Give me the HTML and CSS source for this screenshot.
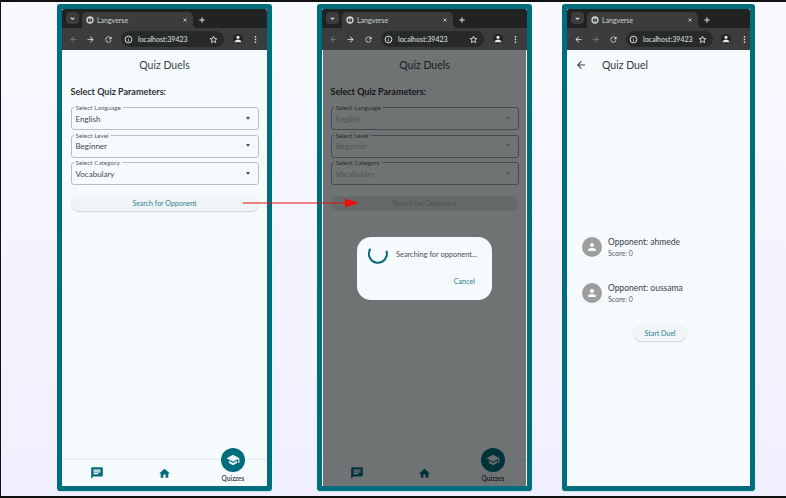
FILE: index.html
```html
<!DOCTYPE html>
<html lang="en">
<head>
  <meta charset="UTF-8" />
  <title>Langverse – Quiz Duels</title>
  <link rel="stylesheet" href="styles.css">
</head>
<body>

  <svg class="defs" width="0" height="0">
    <symbol id="i-chevron" viewBox="0 0 24 24"><path d="M6 9l6 6 6-6" fill="none" stroke="currentColor" stroke-width="3.5"/></symbol>
    <symbol id="i-fav" viewBox="0 0 24 24"><circle cx="12" cy="12" r="11" fill="#c9cccc"/><path d="M6 8h5v9H6zM13 8h5v9h-5z" fill="#333"/></symbol>
    <symbol id="i-close" viewBox="0 0 24 24"><path d="M6 6l12 12M18 6L6 18" stroke="currentColor" stroke-width="3"/></symbol>
    <symbol id="i-plus" viewBox="0 0 24 24"><path d="M12 4v16M4 12h16" stroke="currentColor" stroke-width="3"/></symbol>
    <symbol id="i-back" viewBox="0 0 24 24"><path d="M20 11H7.8l5.6-5.6L12 4l-8 8 8 8 1.4-1.4L7.8 13H20z" fill="currentColor"/></symbol>
    <symbol id="i-forward" viewBox="0 0 24 24"><path d="M4 11h12.2l-5.6-5.6L12 4l8 8-8 8-1.4-1.4 5.6-5.6H4z" fill="currentColor"/></symbol>
    <symbol id="i-reload" viewBox="0 0 24 24"><path d="M17.6 6.4A8 8 0 1 0 19.7 14h-2.1a6 6 0 1 1-1.4-6.2L13 11h7V4z" fill="currentColor"/></symbol>
    <symbol id="i-info" viewBox="0 0 24 24"><circle cx="12" cy="12" r="9" fill="none" stroke="currentColor" stroke-width="2.5"/><path d="M11 11h2v6h-2zM11 7h2v2h-2z" fill="currentColor"/></symbol>
    <symbol id="i-star" viewBox="0 0 24 24"><path d="M12 3.5l2.6 5.8 6.3.6-4.8 4.2 1.4 6.2L12 17.1l-5.5 3.2 1.4-6.2-4.8-4.2 6.3-.6z" fill="none" stroke="currentColor" stroke-width="2.4"/></symbol>
    <symbol id="i-person" viewBox="0 0 24 24"><path d="M12 12a4 4 0 1 0 0-8 4 4 0 0 0 0 8zm0 2c-2.7 0-8 1.3-8 4v2h16v-2c0-2.7-5.3-4-8-4z" fill="currentColor"/></symbol>
    <symbol id="i-dots" viewBox="0 0 24 24"><circle cx="12" cy="5" r="2.2" fill="currentColor"/><circle cx="12" cy="12" r="2.2" fill="currentColor"/><circle cx="12" cy="19" r="2.2" fill="currentColor"/></symbol>
    <symbol id="i-chat" viewBox="0 0 24 24"><path d="M20 2H4a2 2 0 0 0-2 2v18l4-4h14a2 2 0 0 0 2-2V4a2 2 0 0 0-2-2zM6 9h12v2H6zm8 5H6v-2h8zm4-6H6V6h12z" fill="currentColor"/></symbol>
    <symbol id="i-home" viewBox="0 0 24 24"><path d="M10 20v-6h4v6h5v-8h3L12 3 2 12h3v8z" fill="currentColor"/></symbol>
    <symbol id="i-school" viewBox="0 0 24 24"><path d="M5 13.2v4L12 21l7-3.8v-4L12 17zM12 3L1 9l11 6 9-4.9V17h2V9z" fill="currentColor"/></symbol>
  </svg>

  <div class="stage">

    <!-- first phone: quiz parameters -->
    <section class="phone">
      <div class="chrome">
        <div class="tabstrip">
          <span class="tab-menu"><svg class="ic7"><use href="#i-chevron"/></svg></span>
          <div class="tab">
            <svg class="ic8"><use href="#i-fav"/></svg>
            <span class="tab-title">Langverse</span>
            <svg class="ic6 tab-close"><use href="#i-close"/></svg>
          </div>
          <svg class="ic8 new-tab"><use href="#i-plus"/></svg>
        </div>
        <div class="toolbar">
          <svg class="ic9 dim"><use href="#i-back"/></svg>
          <svg class="ic9"><use href="#i-forward"/></svg>
          <svg class="ic9"><use href="#i-reload"/></svg>
          <div class="omnibox">
            <svg class="ic9"><use href="#i-info"/></svg>
            <span class="url">localhost:39423</span>
            <svg class="ic9 star"><use href="#i-star"/></svg>
          </div>
          <svg class="ic10 profile"><use href="#i-person"/></svg>
          <svg class="ic9"><use href="#i-dots"/></svg>
        </div>
      </div>
      <div class="screen">
        <h1 class="title">Quiz Duels</h1>
        <div class="form">
          <h2 class="form-head">Select Quiz Parameters:</h2>
          <div class="select"><label>Select Language</label><span>English</span><i class="caret"></i></div>
          <div class="select"><label>Select Level</label><span>Beginner</span><i class="caret"></i></div>
          <div class="select"><label>Select Category</label><span>Vocabulary</span><i class="caret"></i></div>
          <button class="btn btn-wide">Search for Opponent</button>
        </div>
        <nav class="bottom-nav">
          <svg class="nav-icon chat"><use href="#i-chat"/></svg>
          <svg class="nav-icon home"><use href="#i-home"/></svg>
          <div class="nav-active">
            <span class="fab"><svg class="ic14"><use href="#i-school"/></svg></span>
            <span class="nav-label">Quizzes</span>
          </div>
        </nav>
      </div>
    </section>

    <!-- second phone: same page, dialog open -->
    <section class="phone second">
      <div class="chrome">
        <div class="tabstrip">
          <span class="tab-menu"><svg class="ic7"><use href="#i-chevron"/></svg></span>
          <div class="tab">
            <svg class="ic8"><use href="#i-fav"/></svg>
            <span class="tab-title">Langverse</span>
            <svg class="ic6 tab-close"><use href="#i-close"/></svg>
          </div>
          <svg class="ic8 new-tab"><use href="#i-plus"/></svg>
        </div>
        <div class="toolbar">
          <svg class="ic9 dim"><use href="#i-back"/></svg>
          <svg class="ic9"><use href="#i-forward"/></svg>
          <svg class="ic9"><use href="#i-reload"/></svg>
          <div class="omnibox">
            <svg class="ic9"><use href="#i-info"/></svg>
            <span class="url">localhost:39423</span>
            <svg class="ic9 star"><use href="#i-star"/></svg>
          </div>
          <svg class="ic10 profile"><use href="#i-person"/></svg>
          <svg class="ic9"><use href="#i-dots"/></svg>
        </div>
      </div>
      <div class="screen">
        <h1 class="title">Quiz Duels</h1>
        <div class="form">
          <h2 class="form-head">Select Quiz Parameters:</h2>
          <div class="select"><label>Select Language</label><span>English</span><i class="caret"></i></div>
          <div class="select"><label>Select Level</label><span>Beginner</span><i class="caret"></i></div>
          <div class="select"><label>Select Category</label><span>Vocabulary</span><i class="caret"></i></div>
          <button class="btn btn-wide">Search for Opponent</button>
        </div>
        <nav class="bottom-nav">
          <svg class="nav-icon chat"><use href="#i-chat"/></svg>
          <svg class="nav-icon home"><use href="#i-home"/></svg>
          <div class="nav-active">
            <span class="fab"><svg class="ic14"><use href="#i-school"/></svg></span>
            <span class="nav-label">Quizzes</span>
          </div>
        </nav>
        <div class="scrim">
          <div class="dialog">
            <div class="dialog-row">
              <svg class="spinner" viewBox="0 0 20 20"><path d="M2.4 4.8A9 9 0 1 0 18.4 6.8" fill="none" stroke="#0b6a78" stroke-width="2"/></svg>
              <span>Searching for opponent...</span>
            </div>
            <span class="dialog-action">Cancel</span>
          </div>
        </div>
      </div>
    </section>

    <!-- third phone: duel lobby -->
    <section class="phone third">
      <div class="chrome">
        <div class="tabstrip">
          <span class="tab-menu"><svg class="ic7"><use href="#i-chevron"/></svg></span>
          <div class="tab">
            <svg class="ic8"><use href="#i-fav"/></svg>
            <span class="tab-title">Langverse</span>
            <svg class="ic6 tab-close"><use href="#i-close"/></svg>
          </div>
          <svg class="ic8 new-tab"><use href="#i-plus"/></svg>
        </div>
        <div class="toolbar">
          <svg class="ic9"><use href="#i-back"/></svg>
          <svg class="ic9 dim"><use href="#i-forward"/></svg>
          <svg class="ic9"><use href="#i-reload"/></svg>
          <div class="omnibox">
            <svg class="ic9"><use href="#i-info"/></svg>
            <span class="url">localhost:39423</span>
            <svg class="ic9 star"><use href="#i-star"/></svg>
          </div>
          <svg class="ic10 profile"><use href="#i-person"/></svg>
          <svg class="ic9"><use href="#i-dots"/></svg>
        </div>
      </div>
      <div class="screen">
        <header class="duel-bar">
          <svg class="back-arrow"><use href="#i-back"/></svg>
          <h1>Quiz Duel</h1>
        </header>
        <div class="players">
          <div class="player">
            <span class="avatar"><svg class="ic12"><use href="#i-person"/></svg></span>
            <div><p class="player-name">Opponent: ahmede</p><p class="player-score">Score: 0</p></div>
          </div>
          <div class="player">
            <span class="avatar"><svg class="ic12"><use href="#i-person"/></svg></span>
            <div><p class="player-name">Opponent: oussama</p><p class="player-score">Score: 0</p></div>
          </div>
          <button class="btn btn-start">Start Duel</button>
        </div>
      </div>
    </section>

    <svg class="flow-arrow" viewBox="0 0 116 12" width="116" height="12">
      <path d="M0 6h104" stroke="#e01010" stroke-width="1.2"/>
      <path d="M102 1.5L116 6l-14 4.5z" fill="#ee0d0d"/>
    </svg>
  </div>

</body>
</html>
```

FILE: styles.css
```css
* {
  box-sizing: border-box;
}
body {
  margin: 0;
  width: 786px;
  height: 498px;
  overflow: hidden;
  font-family: 'Lato', 'Liberation Sans', sans-serif;
  background: linear-gradient(#f9faff, #f0efff);
  color: #3c4043;
  border-top: 2px solid #111;
  border-left: 1px solid #111;
  border-bottom: 2px solid #111;
}
.defs {
  display: block;
  height: 0;
}
.stage {
  position: relative;
  display: flex;
  padding: 2px 0 0 56px;
}
.phone {
  width: 215px;
  height: 487px;
  border: 5px solid #006d7c;
  border-radius: 3px;
  display: flex;
  flex-direction: column;
  background: #f5fafd;
  box-shadow: 0 1px 1px #bfe0ea;
}
.second {
  margin-left: 45px;
}
.third {
  width: 193px;
  margin-left: 30px;
}

/* browser chrome */
.chrome {
  flex: none;
  height: 41px;
  color: #e4e6e6;
}
.tabstrip {
  height: 19px;
  background: #202322;
  display: flex;
  align-items: flex-end;
  padding-left: 4px;
  border-radius: 2px 2px 0 0;
}
.tab-menu {
  width: 13px;
  height: 12px;
  margin: 0 3px 4px 0;
  border-radius: 4px;
  background: #3b3d3d;
  display: flex;
  align-items: center;
  justify-content: center;
}
.tab {
  position: relative;
  width: 111px;
  height: 16px;
  background: #3b3d3d;
  border-radius: 5px 5px 0 0;
  display: flex;
  align-items: center;
  padding: 0 5px 0 4px;
  gap: 3px;
}
.tab::after {
  content: "";
  position: absolute;
  left: 100%;
  bottom: 0;
  width: 4px;
  height: 4px;
  background: radial-gradient(circle at 100% 0, transparent 4px, #3b3d3d 4px);
}
.tab-title {
  font-size: 7px;
  color: #cfd2d2;
}
.tab-close {
  margin-left: auto;
}
.new-tab {
  margin: 0 0 4px 5px;
}
.toolbar {
  height: 22px;
  background: #3b3d3d;
  display: flex;
  align-items: center;
  padding: 0 7px 0 6.5px;
  gap: 8.5px;
}
.omnibox {
  width: 105px;
  height: 16px;
  border-radius: 8px;
  background: #282a2a;
  display: flex;
  align-items: center;
  gap: 5px;
  padding: 0 6px 0 3px;
}
.url {
  font-size: 7px;
  color: #dfe1e1;
}
.star {
  margin-left: auto;
}
.profile {
  background: #202322;
  border-radius: 50%;
}
.dim {
  opacity: 0.4;
}
.ic6 { width: 6px; height: 6px; }
.ic7 { width: 7px; height: 7px; }
.ic8 { width: 8px; height: 8px; }
.ic9 { width: 9px; height: 9px; flex: none; }
.ic10 { width: 10px; height: 10px; flex: none; }
.ic12 { width: 12px; height: 12px; }
.ic14 { width: 14px; height: 14px; }

/* third window is narrower, so its omnibox shrinks */
.third .omnibox {
  width: 87px;
}

/* app page */
.screen {
  position: relative;
  flex: 1;
  overflow: hidden;
  background: #f5fafd;
  display: flex;
  flex-direction: column;
  border-radius: 0 0 2px 2px;
}
.title {
  margin: 8px 0 0;
  font-size: 10.5px;
  line-height: 15px;
  font-weight: 400;
  text-align: center;
  color: #3a3f42;
}
.form {
  padding: 0 8.5px;
  flex: 1;
}
.form-head {
  margin: 13px 0 9px;
  font-size: 9px;
  line-height: 12px;
  font-weight: 700;
  color: #2c3134;
}
.select {
  position: relative;
  height: 23px;
  margin-bottom: 4.7px;
  border: 1.5px solid #b9c0c4;
  border-radius: 3px;
  padding: 4.5px 4px 0;
  font-size: 8px;
  line-height: 13px;
  color: #43484b;
}
.select label {
  position: absolute;
  left: 2px;
  top: -4px;
  padding: 0 2px;
  font-size: 6.4px;
  line-height: 7px;
  color: #5d6366;
  background: #f5fafd;
}
.caret {
  position: absolute;
  right: 8px;
  top: 8.5px;
  border: 2.5px solid transparent;
  border-top: 3px solid #4a4f52;
  border-bottom: 0;
}
.btn {
  border: 0;
  display: block;
  border-radius: 8px;
  background: #eff4f6;
  box-shadow: 0 1px 1px rgba(0,0,0,0.14);
  color: #2f818e;
  font-family: inherit;
  font-size: 7px;
  padding: 0;
}
.btn-wide {
  width: 100%;
  height: 15px;
  margin-top: 10.3px;
}
.bottom-nav {
  position: relative;
  flex: none;
  height: 27px;
  border-top: 1px solid #e8eef0;
  box-shadow: 0 -1px 1px rgba(0,0,0,0.02);
}
.nav-icon {
  position: absolute;
  color: #006d7c;
}
.chat {
  left: 28px;
  top: 6px;
  width: 14px;
  height: 14px;
}
.home {
  left: 96px;
  top: 7px;
  width: 13px;
  height: 13px;
}
.nav-active {
  position: absolute;
  left: 151px;
  top: -12px;
  width: 40px;
  display: flex;
  flex-direction: column;
  align-items: center;
  gap: 3px;
}
.fab {
  width: 24px;
  height: 24px;
  border-radius: 50%;
  background: #006d7c;
  color: #e8f4f6;
  display: flex;
  align-items: center;
  justify-content: center;
  box-shadow: 0 0 0 2px #f5fafd;
}
.nav-label {
  font-size: 6.5px;
  line-height: 8px;
  font-weight: 700;
  color: #4a4f52;
}

/* dimmed form under the dialog */
.second .select {
  border-color: #9aa1a5;
  color: #b0b6b9;
}
.second .select label {
  color: #5d6366;
}
.second .caret {
  border-top-color: #b0b6b9;
}
.second .btn-wide {
  background: #dfe5e8;
  box-shadow: none;
  color: #a9b1b4;
}

/* dialog */
.scrim {
  position: absolute;
  inset: 0 1px;
  background: rgba(0,0,0,0.54);
}
.dialog {
  position: absolute;
  left: 34px;
  top: 187px;
  width: 135px;
  height: 63px;
  border-radius: 14px;
  background: #f5fafd;
  padding: 7px 11px;
}
.dialog-row {
  display: flex;
  align-items: center;
  gap: 8px;
  font-size: 7.4px;
  color: #4a4f52;
}
.spinner {
  width: 20px;
  height: 20px;
}
.dialog-action {
  display: block;
  margin-top: 13px;
  text-align: right;
  padding-right: 6px;
  font-size: 7.2px;
  color: #2f818e;
}

/* duel lobby */
.duel-bar {
  display: flex;
  align-items: center;
  height: 29px;
  padding-left: 8px;
  color: #33383b;
}
.back-arrow {
  width: 12px;
  height: 12px;
}
.duel-bar h1 {
  margin: 0 0 0 15px;
  font-size: 10.5px;
  font-weight: 400;
}
.players {
  padding-top: 157px;
}
.player {
  display: flex;
  align-items: center;
  gap: 6px;
  height: 22px;
  padding-left: 15px;
  margin-bottom: 24px;
}
.avatar {
  width: 20px;
  height: 20px;
  border-radius: 50%;
  background: #9e9e9e;
  color: #fafafa;
  display: flex;
  align-items: center;
  justify-content: center;
}
.player p {
  margin: 0;
}
.player-name {
  font-size: 8.5px;
  line-height: 11px;
  color: #3c4144;
}
.player-score {
  font-size: 7px;
  line-height: 10px;
  color: #555a5d;
}
.btn-start {
  width: 54px;
  height: 16px;
  margin: -3px 0 0 66px;
}

/* annotation */
.flow-arrow {
  position: absolute;
  left: 242px;
  top: 195px;
}
```
